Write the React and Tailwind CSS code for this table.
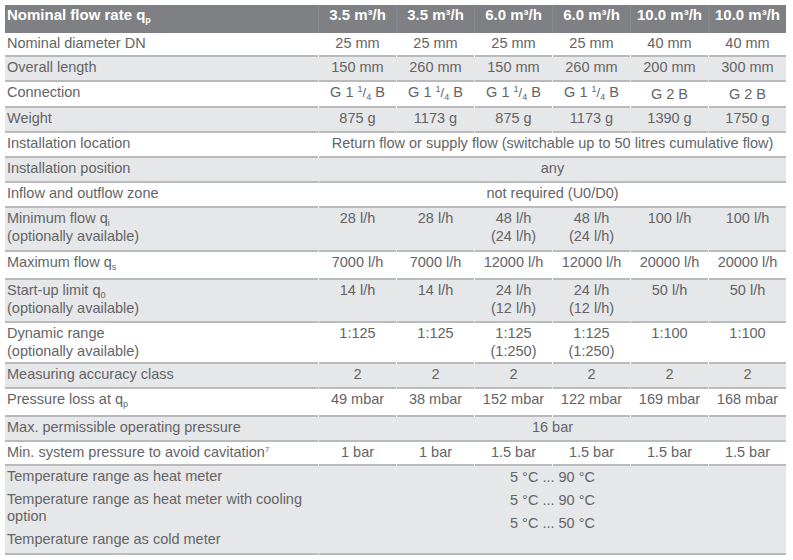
import React from "react";

const Sub = ({ children }) => (
  <sub className="text-[9px] bottom-[-3px]">{children}</sub>
);
const Frac = () => (
  <span>
    G 1 <sup className="text-[9px] top-[-5px]">1</sup>
    <span className="text-[13px]">/</span>
    <sub className="text-[9px] bottom-[-3px]">4</sub> B
  </span>
);

const W = "bg-white";
const G = "bg-[#e6e7e8]";

const rows = [
  { label: "Nominal diameter DN", vals: ["25 mm", "25 mm", "25 mm", "25 mm", "40 mm", "40 mm"], h: "h-[24px]", bg: W },
  { label: "Overall length", vals: ["150 mm", "260 mm", "150 mm", "260 mm", "200 mm", "300 mm"], h: "h-[25px]", bg: G },
  { label: "Connection", vals: [<Frac />, <Frac />, <Frac />, <Frac />, <span className="relative top-[2px]">G 2 B</span>, <span className="relative top-[2px]">G 2 B</span>], h: "h-[26px]", bg: W },
  { label: "Weight", vals: ["875 g", "1173 g", "875 g", "1173 g", "1390 g", "1750 g"], h: "h-[25px]", bg: G },
  { label: "Installation location", span: "Return flow or supply flow (switchable up to 50 litres cumulative flow)", h: "h-[25px]", bg: W },
  { label: "Installation position", span: "any", h: "h-[25px]", bg: G },
  { label: "Inflow and outflow zone", span: "not required (U0/D0)", h: "h-[25px]", bg: W },
  {
    label: (<>Minimum flow q<Sub>i</Sub><br />(optionally available)</>),
    vals: ["28 l/h", "28 l/h", <>48 l/h<br />(24 l/h)</>, <>48 l/h<br />(24 l/h)</>, "100 l/h", "100 l/h"],
    h: "h-[44px]", bg: G,
  },
  { label: (<>Maximum flow q<Sub>s</Sub></>), vals: ["7000 l/h", "7000 l/h", "12000 l/h", "12000 l/h", "20000 l/h", "20000 l/h"], h: "h-[28px]", bg: W },
  {
    label: (<>Start-up limit q<Sub>0</Sub><br />(optionally available)</>),
    vals: ["14 l/h", "14 l/h", <>24 l/h<br />(12 l/h)</>, <>24 l/h<br />(12 l/h)</>, "50 l/h", "50 l/h"],
    h: "h-[43px]", bg: G,
  },
  {
    label: (<>Dynamic range<br />(optionally available)</>),
    vals: ["1:125", "1:125", <>1:125<br />(1:250)</>, <>1:125<br />(1:250)</>, "1:100", "1:100"],
    h: "h-[41px]", bg: W,
  },
  { label: "Measuring accuracy class", vals: ["2", "2", "2", "2", "2", "2"], h: "h-[25px]", bg: G },
  { label: (<>Pressure loss at q<Sub>p</Sub></>), vals: ["49 mbar", "38 mbar", "152 mbar", "122 mbar", "169 mbar", "168 mbar"], h: "h-[28px]", bg: W },
  { label: "Max. permissible operating pressure", span: "16 bar", h: "h-[25px]", bg: G },
  { label: (<>Min. system pressure to avoid cavitation<sup className="text-[8px] top-[-5px]">7</sup></>), vals: ["1 bar", "1 bar", "1.5 bar", "1.5 bar", "1.5 bar", "1.5 bar"], h: "h-[24px]", bg: W },
];

const cell = "border-b-2 border-[#b9babc] pt-px leading-[18px]";

export default function App() {
  return (
    <div className="bg-white w-[793px] h-[560px] pt-[5px] pl-[5px] text-[14.5px] text-[#636467]" style={{ fontFamily: '"Liberation Sans", Arial, sans-serif' }}>
      <div className="w-[781px]">
        {/* header */}
        <div className="grid grid-cols-[313px_repeat(6,77px)] gap-x-px bg-[#88898c] h-[28px] text-white font-bold text-[15px] leading-[18px]">
          <div className="bg-[#7f8083] pt-px pl-[2px]">Nominal flow rate q<Sub>p</Sub></div>
          {["3.5", "3.5", "6.0", "6.0", "10.0", "10.0"].map((v, i) => (
            <div key={i} className="bg-[#7f8083] pt-px text-center whitespace-nowrap">{v} m³/h</div>
          ))}
        </div>
        {rows.map((r, i) => (
          <div key={i} className={`grid grid-cols-[313px_repeat(6,77px)] gap-x-px ${r.bg} ${r.h}`}>
            <div className={`${cell} pl-[2px]`}>{r.label}</div>
            {r.span ? (
              <div className={`${cell} col-span-6 text-center`}>{r.span}</div>
            ) : (
              r.vals.map((v, j) => (
                <div key={j} className={`${cell} text-center whitespace-nowrap`}>{v}</div>
              ))
            )}
          </div>
        ))}
        {/* temperature block */}
        <div className={`grid grid-cols-[313px_repeat(6,77px)] gap-x-px ${G} h-[89px]`}>
          <div className="border-b-2 border-[#b9babc] pl-[2px] pt-[2px] leading-[17px] flex flex-col gap-[6px]">
            <div>Temperature range as heat meter</div>
            <div>Temperature range as heat meter with cooling<br />option</div>
            <div>Temperature range as cold meter</div>
          </div>
          <div className="border-b-2 border-[#b9babc] col-span-6 text-center leading-[23px]">
            <div>5 °C ... 90 °C</div>
            <div>5 °C ... 90 °C</div>
            <div>5 °C ... 50 °C</div>
          </div>
        </div>
      </div>
    </div>
  );
}
